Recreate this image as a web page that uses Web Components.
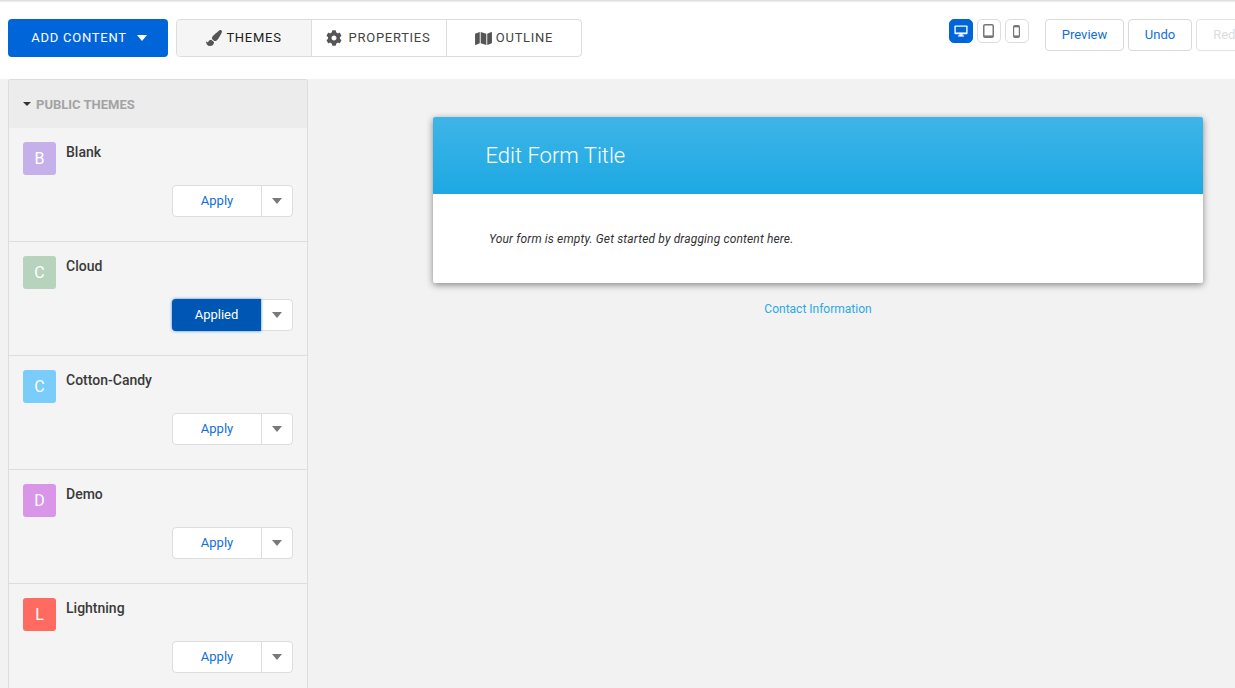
<!DOCTYPE html>
<html><head><meta charset="utf-8">
<style>
html,body{margin:0;height:100%;background:#fff;overflow:hidden;font-family:Roboto,"Liberation Sans",sans-serif;}
</style></head>
<body>
<form-builder></form-builder>
<script>
const ICONS={
brush:['0 0 512 512','M167.02 309.34c-40.12 2.58-76.53 17.86-97.19 72.3-2.35 6.21-8 9.98-14.59 9.98-11.11 0-45.46-27.67-55.25-34.35C0 439.62 37.93 512 128 512c75.86 0 128-43.77 128-120.19 0-3.11-.65-6.08-.97-9.13l-88.01-73.34zM457.89 0c-15.16 0-29.37 6.71-40.21 16.45C213.27 199.05 192 203.34 192 257.09c0 13.7 3.25 26.76 8.73 38.7l63.82 53.18c7.21 1.8 14.64 3.03 22.39 3.03 62.11 0 98.11-45.47 211.16-256.46 7.38-14.35 13.9-29.85 13.9-45.99C512 20.64 486 0 457.89 0z'],
cog:['0 0 512 512','M487.4 315.7l-42.6-24.6c4.3-23.2 4.3-47 0-70.2l42.6-24.6c4.9-2.8 7.1-8.6 5.5-14-11.1-35.6-30-67.8-54.7-94.6-3.8-4.1-10-5.1-14.8-2.3L380.8 110c-17.9-15.4-38.5-27.3-60.8-35.1V25.8c0-5.6-3.9-10.5-9.4-11.7-36.7-8.2-74.3-7.8-109.2 0-5.5 1.2-9.4 6.1-9.4 11.7V75c-22.2 7.9-42.8 19.8-60.8 35.1L88.7 85.5c-4.9-2.8-11-1.9-14.8 2.3-24.7 26.7-43.6 58.9-54.7 94.6-1.7 5.4.6 11.2 5.5 14L67.3 221c-4.3 23.2-4.3 47 0 70.2l-42.6 24.6c-4.9 2.8-7.1 8.6-5.5 14 11.1 35.6 30 67.8 54.7 94.6 3.8 4.1 10 5.1 14.8 2.3l42.6-24.6c17.9 15.4 38.5 27.3 60.8 35.1v49.2c0 5.6 3.9 10.5 9.4 11.7 36.7 8.2 74.3 7.8 109.2 0 5.5-1.2 9.4-6.1 9.4-11.7v-49.2c22.2-7.9 42.8-19.8 60.8-35.1l42.6 24.6c4.9 2.8 11 1.9 14.8-2.3 24.7-26.7 43.6-58.9 54.7-94.6 1.5-5.5-.7-11.3-5.6-14.1zM256 336c-44.1 0-80-35.9-80-80s35.9-80 80-80 80 35.9 80 80-35.9 80-80 80z'],
map:['0 0 576 512','M0 117.66v346.32c0 11.32 11.43 19.06 21.94 14.86L160 416V32L20.12 87.95A32.006 32.006 0 0 0 0 117.66zM192 416l192 64V96L192 32v384zM554.06 33.16L416 96v384l139.88-55.95A31.996 31.996 0 0 0 576 394.34V48.02c0-11.32-11.43-19.06-21.94-14.86z']
};
function svgIcon(n,w,h){const [v,d]=ICONS[n];return `<svg width="${w}" height="${h}" viewBox="${v}" fill="#555" style="display:block;flex:none"><path d="${d}"/></svg>`;}

class TabGroup extends HTMLElement{
 constructor(){super();this.attachShadow({mode:'open'}).innerHTML=`<style>
 :host{display:flex;width:406px;height:38px;flex:none;box-sizing:border-box;border:1px solid #ddd;border-radius:4px;overflow:hidden;background:#fff}
 </style><slot></slot>`;}
}
class TabItem extends HTMLElement{
 constructor(){super();const i=this.getAttribute('icon');const s=this.attachShadow({mode:'open'});
 const dim=i==='map'?[17,15]:[16,16];
 s.innerHTML=`<style>
 :host{flex:none;width:135px;box-sizing:border-box;display:flex;align-items:center;justify-content:center;gap:4px;font:400 13px/1 Roboto,sans-serif;letter-spacing:.72px;color:#333;border-left:1px solid #ddd}
 :host(:first-child){border-left:0;width:134px}
 :host([active]){background:#f5f5f5;color:#222}
 :host([icon=cog]){gap:7px;color:#444;padding-right:2px}
 :host([icon=map]){gap:4px;color:#444}
 span{display:block;margin-bottom:2px}
 </style>${svgIcon(i,dim[0],dim[1])}<span><slot></slot></span>`;}
}
class AddButton extends HTMLElement{
 constructor(){super();this.attachShadow({mode:'open'}).innerHTML=`<style>
 :host{display:flex;flex:none;align-items:center;justify-content:center;gap:10px;width:160px;height:38px;background:#0065d9;border-radius:4px;color:#fff;font:400 13px/1 Roboto,sans-serif;letter-spacing:.75px;box-sizing:border-box;padding-left:2px}
 span{display:block;margin-bottom:2px}
 i{display:block;width:0;height:0;border:5px solid transparent;border-top:6px solid #fff;border-bottom:0}
 </style><span><slot></slot></span><i></i>`;}
}
class DeviceToggle extends HTMLElement{
 constructor(){super();const k=this.getAttribute('kind');const a=this.hasAttribute('active');
 const art={
  desktop:`<svg width="14" height="12.25" viewBox="0 0 16 14"><rect x="0.5" y="0.5" width="15" height="10" rx="1" fill="#fff"/><rect x="2" y="2" width="12" height="6.5" fill="#0065d9"/><rect x="6" y="10.5" width="4" height="2.2" fill="#fff"/><rect x="4.5" y="12" width="7" height="1.2" fill="#fff"/></svg>`,
  tablet:`<svg width="11" height="14" viewBox="0 0 11 14"><rect x="0.75" y="0.75" width="9.5" height="12.5" rx="1.3" fill="none" stroke="#777" stroke-width="1.5"/><rect x="1" y="11.4" width="9" height="1.8" fill="#777"/></svg>`,
  phone:`<svg width="7" height="13" viewBox="0 0 7 13"><rect x="0.6" y="0.6" width="5.8" height="11.8" rx="1.2" fill="none" stroke="#777" stroke-width="1.2"/><rect x="1" y="1" width="5" height="1.4" fill="#777"/><rect x="1" y="10.4" width="5" height="1.6" fill="#777"/></svg>`}[k];
 this.attachShadow({mode:'open'}).innerHTML=`<style>
 :host{display:flex;align-items:center;justify-content:center;width:24px;height:24px;box-sizing:border-box;border-radius:5px;border:1px solid ${a?'#0065d9':'#ddd'};background:${a?'#0065d9':'#fff'};padding-right:${a?0:1}px}
 </style>${art}`;}
}
class ActionButton extends HTMLElement{
 constructor(){super();this.attachShadow({mode:'open'}).innerHTML=`<style>
 :host{display:flex;align-items:center;justify-content:center;flex:none;height:32px;box-sizing:border-box;border:1px solid #d9d9d9;border-radius:4px;background:#fff;color:#0f6fd8;font:400 13px/1 Roboto,sans-serif;padding-bottom:2px}
 :host([disabled]){color:#ddd;border-color:#e3e3e3}
 </style><slot></slot>`;}
}
class TopBar extends HTMLElement{
 constructor(){super();this.attachShadow({mode:'open'}).innerHTML=`<style>
 :host{display:flex;align-items:flex-start;height:79px;box-sizing:border-box;padding:19px 0 0 8px;background:#fff;overflow:hidden;position:relative;flex:none}
 :host::before{content:"";position:absolute;left:0;right:0;top:0;height:2px;background:linear-gradient(#d8d8d8,#f4f4f4)}
 .tabs{margin-left:8px;flex:none}
 .devices{display:flex;gap:4px;margin-left:367px;flex:none}
 .actions{display:flex;gap:4px;margin-left:16px;flex:none}
 ::slotted([slot=preview]){width:79px}
 ::slotted([slot=undo]){width:64px}
 ::slotted([slot=redo]){width:64px}
 </style><slot name="add"></slot><div class="tabs"><slot name="tabs"></slot></div>
 <div class="devices"><slot name="devices"></slot></div>
 <div class="actions"><slot name="preview"></slot><slot name="undo"></slot><slot name="redo"></slot></div>`;}
}
class ThemeItem extends HTMLElement{
 constructor(){super();const c=this.getAttribute('color'),l=this.getAttribute('letter'),ap=this.hasAttribute('applied');
 this.attachShadow({mode:'open'}).innerHTML=`<style>
 :host{display:block;height:114px;box-sizing:border-box;padding:14px 14px 0 14px;border-bottom:1px solid #ddd}
 :host(:last-child){border-bottom:0}
 .top{display:flex;gap:10px;height:43px}
 .av{width:33px;height:33px;border-radius:3px;background:${c};color:#fff;display:flex;align-items:center;justify-content:center;font:400 16px/1 Roboto,sans-serif;flex:none}
 .name{font:500 14px/20px Roboto,sans-serif;color:#3a3a3a}
 .btns{display:flex;justify-content:flex-end}
 .group{display:flex;width:121px;height:32px;box-sizing:border-box;border:1px solid #ddd;border-radius:4px;background:#fff}
 .main{width:88px;flex:none;display:flex;align-items:center;justify-content:center;color:#0f6fd8;font:400 13px/1 Roboto,sans-serif;border-right:1px solid #ddd;box-sizing:content-box;padding-bottom:2px;height:28px}
 .arrow{flex:1;display:flex;align-items:center;justify-content:center}
 .arrow i{display:block;width:0;height:0;border:5px solid transparent;border-top:6px solid #7a7a7a;border-bottom:0}
 :host([applied]) .main{background:#0056b3;color:#fff;width:89px;height:30px;margin:-1px 0 -1px -1px;border-radius:4px 0 0 4px;border:0;box-shadow:0 0 3px rgba(0,101,217,.8)}
 </style><div class="top"><div class="av">${l}</div><div class="name"><slot></slot></div></div>
 <div class="btns"><div class="group"><div class="main">${ap?'Applied':'Apply'}</div><div class="arrow"><i></i></div></div></div>`;}
}
class ThemePanel extends HTMLElement{
 constructor(){super();this.attachShadow({mode:'open'}).innerHTML=`<style>
 :host{display:block;width:300px;box-sizing:border-box;border:1px solid #ddd;border-bottom:0;border-radius:3px 3px 0 0;background:#f4f4f4;flex:none;margin-left:8px;height:100%;overflow:hidden}
 header{height:48px;background:#ececec;display:flex;align-items:center;gap:5px;padding-left:14px;box-sizing:border-box;font:700 13px/1 Roboto,sans-serif;color:#a3a3a3}
 header i{display:block;width:0;height:0;border:4px solid transparent;border-top:4px solid #333;border-bottom:0}
 </style><header><i></i><span>PUBLIC THEMES</span></header><slot></slot>`;}
}
class FormCard extends HTMLElement{
 constructor(){super();this.attachShadow({mode:'open'}).innerHTML=`<style>
 :host{display:block;width:770px;border-radius:2px;background:#fff;box-shadow:0 2px 7px rgba(0,0,0,.45);flex:none}
 header{height:77px;background:linear-gradient(#3eb5e8,#1da8e3);display:flex;align-items:center;padding-left:52.5px;color:#fff;font:300 22px/1 Roboto,sans-serif;border-radius:2px 2px 0 0}
 .body{height:89px;box-sizing:border-box;padding-left:56px;display:flex;align-items:center;font:italic 400 12px/1 Roboto,sans-serif;letter-spacing:.15px;color:#333}
 </style><header>Edit Form Title</header><div class="body"><slot></slot></div>`;}
}
class FormCanvas extends HTMLElement{
 constructor(){super();this.attachShadow({mode:'open'}).innerHTML=`<style>
 :host{flex:1;display:flex;flex-direction:column;align-items:flex-start;padding:38px 0 0 125px;box-sizing:border-box;min-width:0}
 .contact{width:770px;text-align:center;margin-top:19px;font:400 12px/14px Roboto,sans-serif;color:#29abe2}
 </style><slot></slot><div class="contact">Contact Information</div>`;}
}
class FormBuilder extends HTMLElement{
 constructor(){super();this.attachShadow({mode:'open'}).innerHTML=`<style>
 :host{display:flex;flex-direction:column;height:688px;overflow:hidden}
 .main{flex:1;display:flex;background:#f2f2f2;min-height:0}
 </style>
 <top-bar>
  <add-button slot="add">ADD CONTENT</add-button>
  <tab-group slot="tabs"><tab-item icon="brush" active>THEMES</tab-item><tab-item icon="cog">PROPERTIES</tab-item><tab-item icon="map">OUTLINE</tab-item></tab-group>
  <device-toggle slot="devices" kind="desktop" active></device-toggle><device-toggle slot="devices" kind="tablet"></device-toggle><device-toggle slot="devices" kind="phone"></device-toggle>
  <action-button slot="preview">Preview</action-button><action-button slot="undo">Undo</action-button><action-button slot="redo" disabled>Redo</action-button>
 </top-bar>
 <div class="main">
  <theme-panel>
   <theme-item letter="B" color="#c5b0ea">Blank</theme-item>
   <theme-item letter="C" color="#b7d2bd" applied>Cloud</theme-item>
   <theme-item letter="C" color="#7accfb">Cotton-Candy</theme-item>
   <theme-item letter="D" color="#d995e8">Demo</theme-item>
   <theme-item letter="L" color="#ff6b61">Lightning</theme-item>
  </theme-panel>
  <form-canvas><form-card>Your form is empty. Get started by dragging content here.</form-card></form-canvas>
 </div>`;}
}
[['tab-group',TabGroup],['tab-item',TabItem],['add-button',AddButton],['device-toggle',DeviceToggle],['action-button',ActionButton],['top-bar',TopBar],['theme-item',ThemeItem],['theme-panel',ThemePanel],['form-card',FormCard],['form-canvas',FormCanvas],['form-builder',FormBuilder]].forEach(([n,c])=>customElements.define(n,c));
</script>
</body></html>
